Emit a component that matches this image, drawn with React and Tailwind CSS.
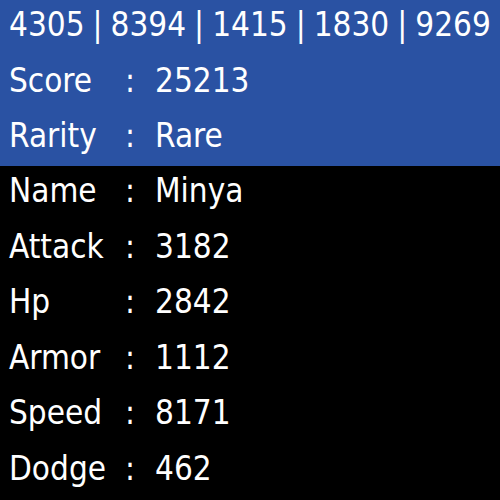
const header = [4305, 8394, 1415, 1830, 9269];

const topRows = [
  ["Score", "25213"],
  ["Rarity", "Rare"],
];

const stats = [
  ["Name", "Minya"],
  ["Attack", "3182"],
  ["Hp", "2842"],
  ["Armor", "1112"],
  ["Speed", "8171"],
  ["Dodge", "462"],
];

function Row({ label, value }) {
  return (
    <div className="flex items-center h-[55.5px] pb-[6px]">
      <span className="w-[116px]">{label}</span>
      <span className="w-[30px]">:</span>
      <span>{value}</span>
    </div>
  );
}

export default function App() {
  return (
    <div
      className="w-[500px] h-[500px] bg-black text-white text-[33px] overflow-hidden"
      style={{ fontFamily: '"DejaVu Sans Condensed", "DejaVu Sans", sans-serif' }}
    >
      <div className="bg-[#2a52a3] pl-[9px] h-[166px]">
        <div className="flex items-center h-[55.5px] pb-[6px]">
          {header.map((n, i) => (
            <span key={n} className="flex items-center">
              {i > 0 && <span className="px-[8px]">|</span>}
              {n}
            </span>
          ))}
        </div>
        {topRows.map(([l, v]) => (
          <Row key={l} label={l} value={v} />
        ))}
      </div>
      <div className="pl-[9px]">
        {stats.map(([l, v]) => (
          <Row key={l} label={l} value={v} />
        ))}
      </div>
    </div>
  );
}
